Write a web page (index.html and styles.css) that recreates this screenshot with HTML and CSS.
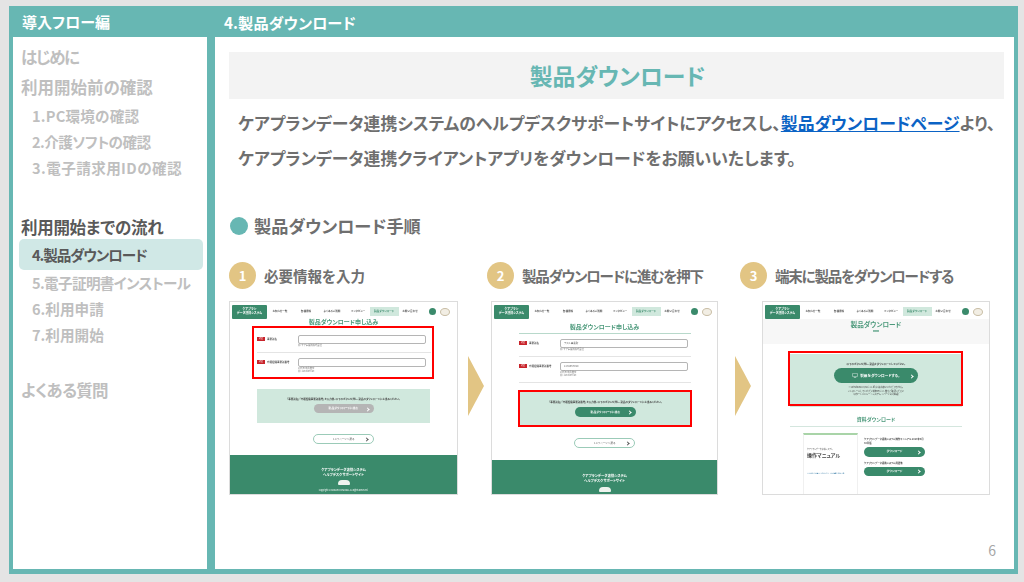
FILE: index.html
```html
<!DOCTYPE html>
<html lang="ja">
<head>
<meta charset="utf-8">
<title>製品ダウンロード</title>
<link rel="stylesheet" href="styles.css">
</head>
<body>
<div class="slide">
  <header class="topbar">
    <div class="topbar-left">導入フロー編</div>
    <div class="topbar-right">4.製品ダウンロード</div>
  </header>
  <div class="panels">
    <nav class="side">
      <div class="s-h first">はじめに</div>
      <div class="s-h">利用開始前の確認</div>
      <div class="s-i i1">1.PC環境の確認</div>
      <div class="s-i tight">2.介護ソフトの確認</div>
      <div class="s-i wide">3.電子請求用IDの確認</div>
      <div class="s-h dark gap1">利用開始までの流れ</div>
      <div class="s-i active tighter">4.製品ダウンロード</div>
      <div class="s-i tight-long">5.電子証明書インストール</div>
      <div class="s-i">6.利用申請</div>
      <div class="s-i">7.利用開始</div>
      <div class="s-h gap2">よくある質問</div>
    </nav>
    <main class="main">
      <h1 class="title">製品ダウンロード</h1>
      <p class="lead">ケアプランデータ連携システムのヘルプデスクサポートサイトにアクセスし、<a class="link">製品ダウンロードページ</a>より、</p>
      <p class="lead second">ケアプランデータ連携クライアントアプリをダウンロードをお願いいたします。</p>
      <h2 class="section"><span class="dot"></span>製品ダウンロード手順</h2>

      <div class="steps">
        <section class="step s1">
          <div class="step-h"><span class="num">1</span><span class="step-t">必要情報を入力</span></div>
          <div class="shot">
            <div class="nav">
              <div class="logo">ケアプラン<br>データ連携システム</div>
              <span class="n">お知らせ一覧</span><span class="n">各種資料</span><span class="n">よくあるご質問</span><span class="n">インタビュー</span><span class="n on">製品ダウンロード</span><span class="n">お問い合わせ</span>
              <span class="round"></span><span class="mascot"></span>
            </div>
            <div class="f-title">製品ダウンロード申し込み</div>
            <div class="f-row"><span class="req">必須</span><span class="lab">事業所名</span><span class="inp"></span></div>
            <div class="f-note">例：ケア事業所株式会社</div>
            <div class="f-line"></div>
            <div class="f-row"><span class="req">必須</span><span class="lab">介護保険事業所番号</span><span class="inp"></span></div>
            <div class="f-note">10桁の半角数字<br>例：1234567890</div>
            <div class="panel p1">
              <div class="p-txt">「事業所名」「介護保険事業所番号」を入力後、以下のボタンを押し、製品のダウンロードにお進みください。</div>
              <div class="btn gray">製品ダウンロードに進む</div>
            </div>
            <div class="back">トップページへ戻る</div>
            <div class="foot"><div>ケアプランデータ連携システム<br>ヘルプデスクサポートサイト</div><span class="cloud"></span><small>Copyright (c) KOKUHO CHUOKAI. All Rights Reserved.</small></div>
            <div class="red r1"></div>
          </div>
        </section>
        <div class="arrow"></div>
        <section class="step s2">
          <div class="step-h"><span class="num">2</span><span class="step-t">製品ダウンロードに進むを押下</span></div>
          <div class="shot">
            <div class="nav">
              <div class="logo">ケアプラン<br>データ連携システム</div>
              <span class="n">お知らせ一覧</span><span class="n">各種資料</span><span class="n">よくあるご質問</span><span class="n">インタビュー</span><span class="n on">製品ダウンロード</span><span class="n">お問い合わせ</span>
              <span class="round"></span><span class="mascot"></span>
            </div>
            <div class="f-title t2">製品ダウンロード申し込み</div>
            <div class="f-line top"></div>
            <div class="f-row"><span class="req">必須</span><span class="lab">事業所名</span><span class="inp">テスト事業所</span></div>
            <div class="f-note">例：ケア事業所株式会社</div>
            <div class="f-line"></div>
            <div class="f-row"><span class="req">必須</span><span class="lab">介護保険事業所番号</span><span class="inp">1234567890</span></div>
            <div class="f-note">10桁の半角数字<br>例：1234567890</div>
            <div class="f-line"></div>
            <div class="panel p2">
              <div class="p-txt">「事業所名」「介護保険事業所番号」を入力後、以下のボタンを押し、製品のダウンロードにお進みください。</div>
              <div class="btn green">製品ダウンロードに進む</div>
            </div>
            <div class="back">トップページへ戻る</div>
            <div class="foot f2"><div>ケアプランデータ連携システム<br>ヘルプデスクサポートサイト</div><span class="cloud"></span></div>
            <div class="red r2"></div>
          </div>
        </section>
        <div class="arrow"></div>
        <section class="step s3">
          <div class="step-h"><span class="num">3</span><span class="step-t">端末に製品をダウンロードする</span></div>
          <div class="shot">
            <div class="nav">
              <div class="logo">ケアプラン<br>データ連携システム</div>
              <span class="n">お知らせ一覧</span><span class="n">各種資料</span><span class="n">よくあるご質問</span><span class="n">インタビュー</span><span class="n on">製品ダウンロード</span><span class="n">お問い合わせ</span>
              <span class="round"></span><span class="mascot"></span>
            </div>
            <div class="hero"><div class="hero-t">製品ダウンロード</div><div class="hero-d">●●●</div></div>
            <div class="panel p3">
              <div class="p-txt">以下のボタンを押し、製品をダウンロードしてください。</div>
              <div class="btn green big"><svg class="mon" viewBox="0 0 10 9"><rect x=".6" y=".6" width="8.8" height="6" rx=".6" fill="none" stroke="#fff" stroke-width=".8"/><path d="M3 8.4h4M5 6.6v1.8" stroke="#fff" stroke-width=".8"/></svg>製品をダウンロードする。</div>
              <div class="p-txt sm">※ Windows10(32ビット版)にはお使いいただけません。<br>インストールしていただく端末のビット数をご確認ください<br>（スタートメニュー＞システム＞バージョン情報）</div>
            </div>
            <div class="doc-h">資料ダウンロード</div>
            <div class="doc">
              <div class="card"><div class="c-s">ケアプランデータ連携システム</div><div class="c-t">操作マニュアル</div><div class="c-l">厚生労働省老健局 公益社団法人 国民健康保険中央会</div></div>
              <div class="links">
                <div class="l-t">ケアプランデータ連携システム操作マニュアル 2023年4月30日版</div>
                <div class="btn green dl">ダウンロード</div>
                <div class="l-t">ケアプランデータ連携システム用語集</div>
                <div class="btn green dl">ダウンロード</div>
              </div>
            </div>
            <div class="red r3"></div>
          </div>
        </section>
      </div>
      <div class="page">6</div>
    </main>
  </div>
</div>
</body>
</html>
```
FILE: styles.css
```css
* { box-sizing: border-box; }
html, body { margin: 0; height: 100%; }
body {
  background: #e4e4e4;
  font-family: "Noto Sans CJK JP", "Noto Sans", sans-serif;
  font-feature-settings: "palt";
  overflow: hidden;
  padding: 6px 6px 8px 9px;
}
.slide {
  width: 1009px;
  height: 568px;
  background: #67b7b3;
  display: flex;
  flex-direction: column;
  padding: 0 4px 5px 4px;
}
.topbar {
  height: 31px;
  display: flex;
  align-items: center;
  color: #fff;
  font-weight: 700;
  font-size: 15px;
}
.topbar-left { width: 211px; padding-left: 9px; }
.topbar-right { font-size: 15.2px; letter-spacing: .1px; }
.panels { flex: 1; display: flex; gap: 8px; min-height: 0; }
.side {
  width: 194px;
  flex: none;
  background: #fff;
  padding: 8px 4px 0 6px;
  color: #bfbfbf;
  font-weight: 700;
  white-space: nowrap;
}
.s-h { font-size: 16.5px; line-height: 24px; padding-left: 2px; margin-top: 6px; }
.s-h.first { margin-top: 0; letter-spacing: -1.5px; }
.s-i { font-size: 14.6px; line-height: 26px; padding-left: 13px; }
.s-i.i1 { margin-top: 4px; letter-spacing: .2px; }
.tight { letter-spacing: -.6px; }
.wide { letter-spacing: .4px; }
.tighter { letter-spacing: -1.1px; }
.tight-long { letter-spacing: -.65px; }
.s-h.dark { color: #595959; letter-spacing: -.3px; }
.gap1 { margin-top: 34px; }
.gap2 { margin-top: 30px; letter-spacing: -.8px; }
.s-i.active {
  background: #d0e8e6;
  color: #595959;
  border-radius: 5px;
  height: 31px;
  line-height: 31px;
}
.main {
  flex: 1;
  min-width: 0;
  background: #fff;
  padding: 15px 10px 0 14px;
  position: relative;
  color: #6f6f6f;
}
.title {
  margin: 0;
  height: 47px;
  padding-left: 2px;
  background: #f3f3f3;
  color: #67b7b3;
  font-size: 22.8px;
  font-weight: 700;
  line-height: 47px;
  text-align: center;
}
.lead {
  margin: 12px 0 0 9px;
  font-size: 16.85px;
  font-weight: 700;
  line-height: 24px;
  white-space: nowrap;
}
.lead.second { margin-top: 11px; }
.link { color: #0b63c5; text-decoration: underline; }
.section {
  margin: 44px 0 0 1px;
  display: flex;
  align-items: center;
  gap: 6px;
  font-size: 17.2px;
  font-weight: 700;
  line-height: 24px;
  color: #6f6f6f;
}
.dot { width: 18px; height: 18px; border-radius: 50%; background: #67b7b3; }
.steps { display: flex; margin-top: 24px; align-items: flex-start; }
.step-h { display: flex; align-items: center; height: 27px; }
.num {
  width: 27px; height: 27px; border-radius: 50%;
  background: #e2c584; color: #fff;
  font-size: 13px; font-weight: 700;
  display: flex; align-items: center; justify-content: center;
  flex: none;
}
.step-t { font-size: 14.5px; font-weight: 700; margin-left: 8px; white-space: nowrap; color: #6f6f6f; }
.s2 .step-t, .s3 .step-t { letter-spacing: -1.2px; }
.s1 { width: 229px; flex: none; }
.s2 { width: 234px; flex: none; }
.s3 { width: 228px; flex: none; margin-left: 4px; }
.s2 .step-h { margin-left: -4px; }
.s3 .step-h { margin-left: -22px; }
.arrow {
  width: 16px;
  height: 60px;
  background: #e2c584;
  clip-path: polygon(0 0, 100% 50%, 0 100%);
  margin: 94px 7px 0 10px;
  flex: none;
}
.shot {
  position: relative;
  width: 229px;
  height: 194px;
  margin-top: 12px;
  background: #fff;
  border: 1.5px solid #dcdcdc;
  overflow: hidden;
  color: #666;
  font-size: 3px;
  line-height: 4px;
  filter: blur(.35px);
}
.s2 .shot { width: 227px; }
.s3 .shot { width: 228px; }
.nav { display: flex; align-items: center; height: 15px; margin-top: 2px; padding-left: 2px; }
.logo {
  width: 35px; height: 14px; background: #3a8a6b; color: #fff; font-size: 3px; line-height: 4.5px;
  text-align: center; border-radius: 1px; padding-top: 2px; white-space: nowrap; font-weight: 700; flex: none;
}
.n { width: 26px; flex: none; text-align: center; white-space: nowrap; height: 9px; line-height: 9px; overflow: hidden; font-size: 2.6px; font-weight: 700; color: #555; }
.n.on { width: 29px; margin: 0 -1.5px; background: #d0e8dd; color: #3a8a6b; }
.round { width: 7px; height: 7px; border-radius: 50%; background: #3a8a6b; margin-left: 6px; flex: none; }
.mascot { width: 10px; height: 8px; border: 1px solid #c8bda5; border-radius: 50%; background: #f2eee4; margin-left: 4px; flex: none; }
.f-title { text-align: center; color: #4d9a7c; font-size: 6px; line-height: 8px; font-weight: 700; margin-top: -1px; }
.f-title.t2 { margin-top: 4px; }
.f-line { height: 1px; background: #e4e4e4; margin: 5px 26px 0 27px; }
.f-line.top { background: #b8d9cb; margin-top: 2px; }
.f-row { display: flex; align-items: center; margin: 9px 0 0 27px; height: 8px; }
.f-line + .f-row { margin-top: 5px; }
.req { width: 8px; height: 3.5px; background: #c8242b; color: #fff; font-size: 2px; line-height: 3.5px; text-align: center; flex: none; }
.lab { width: 31px; margin-left: 2px; font-size: 2.5px; font-weight: 700; color: #555; white-space: nowrap; flex: none; }
.inp { width: 128px; height: 9px; border: 1px solid #b5b5b5; border-radius: 2px; font-size: 2.6px; line-height: 7px; padding-left: 3px; flex: none; }
.f-note { margin: 1px 0 0 68px; font-size: 2.3px; line-height: 3px; color: #777; }
.panel { background: #d0e8dd; text-align: center; }
.p1 { margin: 16px 27px 0; height: 34px; padding-top: 8px; }
.p2 { margin: 7px 26px 0 28px; height: 37px; padding-top: 10px; }
.p-txt { font-size: 2.5px; line-height: 4px; color: #444; font-weight: 700; white-space: nowrap; }
.btn { position: relative; color: #fff; border-radius: 5px; font-size: 2.8px; font-weight: 700; text-align: center; white-space: nowrap; }
.btn::after, .back::after {
  content: "";
  position: absolute;
  right: 5px;
  top: 50%;
  width: 2px;
  height: 2px;
  margin-top: -1px;
  border-top: .5px solid currentColor;
  border-right: .5px solid currentColor;
  transform: rotate(45deg);
}
.btn.gray { background: #b5b5b5; width: 60px; height: 9px; line-height: 9px; margin: 3px auto 0; }
.btn.green { background: #3a8a6b; width: 61px; height: 10px; line-height: 10px; margin: 3px auto 0; }
.back {
  position: relative;
  width: 61px; height: 10px; margin: 11px auto 0; border: 1px solid #9bcbb8; border-radius: 5px;
  font-size: 2.6px; line-height: 8px; text-align: center; color: #555;
}
.foot {
  position: absolute; left: 0; right: 0; bottom: 0; height: 39px;
  background: #3a8a6b; color: #fff; text-align: center; font-size: 3.4px; line-height: 5px; padding-top: 12px; font-weight: 700;
  display: flex; flex-direction: column; align-items: center;
}
.foot.f2 { height: 34px; padding-top: 13px; }
.foot.f2 .cloud { margin-top: 4px; }
.foot small { font-size: 2px; line-height: 3px; font-weight: 400; margin-top: 2px; white-space: nowrap; }
.cloud { width: 12px; height: 5px; background: #eef3ee; border-radius: 4px 4px 1px 1px; margin: 3px 0 2px; flex: none; }
.red { position: absolute; border: 2.5px solid #f00; }
.r1 { left: 22px; top: 24px; width: 182px; height: 53px; }
.r2 { left: 26px; top: 88px; width: 174px; height: 37px; }
.r3 { left: 25px; top: 49px; width: 175px; height: 55px; }
.hero { background: #f7f7f7; height: 25px; text-align: center; }
.hero-t { color: #4d9a7c; font-size: 6.6px; line-height: 10px; font-weight: 700; }
.hero-d { color: #4d9a7c; font-size: 2px; line-height: 6px; }
.p3 { margin: 10px 27px 0; height: 53px; padding-top: 8px; }
.btn.big { width: 84px; height: 15px; line-height: 15px; font-size: 3.6px; border-radius: 8px; margin: 2px auto 3px; }
.mon { width: 6px; height: 5px; margin-right: 2px; vertical-align: -1px; }
.p-txt.sm { font-size: 2.3px; line-height: 3.6px; font-weight: 400; }
.doc-h { text-align: center; color: #4d9a7c; font-size: 5px; line-height: 8px; font-weight: 700; margin: 8px 27px 0; padding-bottom: 3px; border-bottom: 1px solid #d4e6de; }
.doc { display: flex; margin: 6px 0 0 40px; }
.card { width: 55px; height: 62px; border: 1px solid #f0f0f0; border-top: 2px solid #a9d4a8; padding: 13px 3px 0; flex: none; }
.c-s { font-size: 2px; line-height: 3px; white-space: nowrap; }
.c-t { font-size: 5px; line-height: 7px; font-weight: 700; color: #444; white-space: nowrap; }
.c-l { font-size: 1.6px; line-height: 2.4px; margin-top: 14px; color: #4d8ab0; white-space: nowrap; overflow: hidden; }
.links { width: 62px; margin-left: 6px; }
.l-t { font-size: 2.4px; line-height: 4px; font-weight: 700; color: #444; margin-top: 4px; }
.btn.dl { margin: 2px 0 0; width: 61px; height: 9.5px; line-height: 9.5px; }
.page { position: absolute; right: 18px; bottom: 10px; font-size: 14px; line-height: 18px; color: #a6a6a6; font-weight: 400; }
```
